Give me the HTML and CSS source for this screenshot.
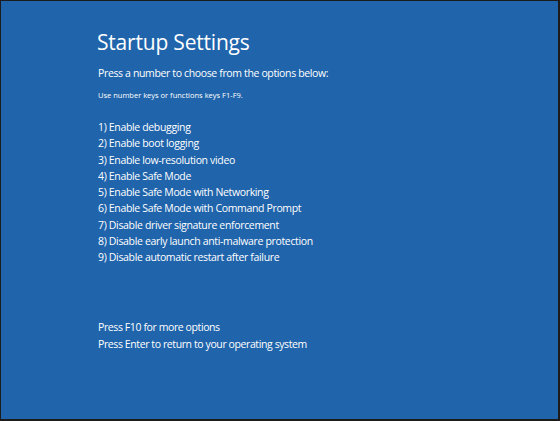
FILE: index.html
```html
<!DOCTYPE html>
<html>
<head>
<meta charset="utf-8">
<link rel="stylesheet" href="styles.css">
</head>
<body>
<div class="screen">
  <div class="content">
    <h1 class="title">Startup Settings</h1>
    <p class="lead">Press a number to choose from the options below:</p>
    <p class="hint">Use number keys or functions keys F1-F9.</p>
    <ul class="options">
      <li>1) Enable debugging</li>
      <li>2) Enable boot logging</li>
      <li>3) Enable low-resolution video</li>
      <li>4) Enable Safe Mode</li>
      <li>5) Enable Safe Mode with Networking</li>
      <li>6) Enable Safe Mode with Command Prompt</li>
      <li>7) Disable driver signature enforcement</li>
      <li>8) Disable early launch anti-malware protection</li>
      <li>9) Disable automatic restart after failure</li>
    </ul>
    <ul class="footer">
      <li>Press F10 for more options</li>
      <li>Press Enter to return to your operating system</li>
    </ul>
  </div>
</div>
</body>
</html>
```
FILE: styles.css
```css
html, body {
  margin: 0;
  padding: 0;
  background: #1a1a1a;
}
.screen {
  box-sizing: border-box;
  width: 560px;
  height: 421px;
  background: #2064ab;
  border-style: solid;
  border-color: #1c1c1c;
  border-width: 1px 2px 2px 1px;
  color: #ffffff;
  font-family: "Open Sans", "Noto Sans", sans-serif;
  overflow: hidden;
}
.content {
  padding: 26px 0 0 96px;
}
.title {
  margin: 0;
  font-size: 21px;
  font-weight: 400;
  line-height: 30px;
  letter-spacing: -0.2px;
}
.lead {
  margin: 8px 0 0 1px;
  font-size: 10.5px;
  line-height: 16px;
  letter-spacing: -0.36px;
}
.hint {
  margin: 8px 0 0 1px;
  font-size: 7.5px;
  line-height: 12px;
}
.options, .footer {
  list-style: none;
  margin: 18px 0 0 1px;
  padding: 0;
  font-size: 10.5px;
  line-height: 16.25px;
  letter-spacing: -0.34px;
}
.footer {
  margin-top: 54px;
  line-height: 17px;
  letter-spacing: -0.4px;
}
```
